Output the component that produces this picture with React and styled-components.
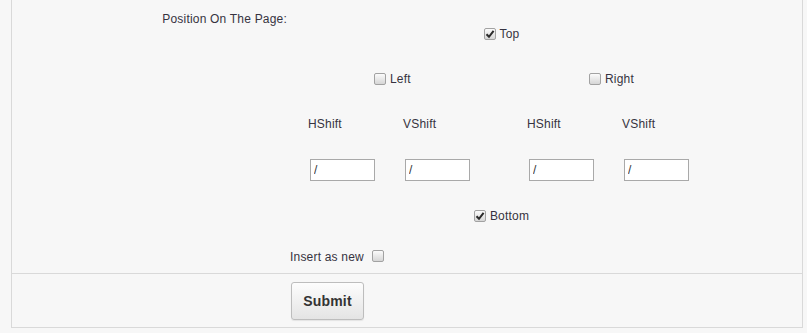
import React from 'react';
import styled, { createGlobalStyle } from 'styled-components';

const GlobalStyle = createGlobalStyle`
  html, body {
    margin: 0;
    background: #f7f7f7;
    font-family: "Liberation Sans", Arial, Helvetica, sans-serif;
    font-size: 12px;
    letter-spacing: 0.2px;
    color: #363340;
  }
`;

const Panel = styled.div`
  box-sizing: border-box;
  margin-left: 11px;
  width: 792px;
  height: 328px;
  border: 1px solid #d9d9d9;
  border-top: 0;
  display: flex;
  flex-direction: column;
`;

const FieldArea = styled.div`
  display: grid;
  grid-template-columns: 278px 420px;
  height: 273px;
`;

const SideLabel = styled.div`
  text-align: right;
  padding: 9px 3px 0 0;
  line-height: 20px;
`;

const Content = styled.div`
  padding-top: 24px;
  display: flex;
  flex-direction: column;
`;

const PositionGrid = styled.div`
  display: grid;
  grid-template-columns: 18px 95px 124px 95px 88px;
  grid-template-rows: 20px 20px 20px 22px 20px;
  row-gap: 25px;
`;

const Cell = styled.div`
  grid-column: ${p => p.col};
  display: flex;
  align-items: center;
  justify-content: ${p => (p.center ? 'center' : 'flex-start')};
  padding-left: ${p => p.indent || 0}px;
  line-height: 20px;
`;

const Choice = styled.label`
  display: flex;
  align-items: center;
  gap: ${p => p.gap || 4}px;
  line-height: 20px;
  cursor: default;
`;

const Box = styled.span`
  box-sizing: border-box;
  width: 12px;
  height: 12px;
  border: 1px solid #a2a2a2;
  border-radius: 2px;
  background: linear-gradient(#fbfbfb, #d6d6d6);
  display: flex;
  align-items: center;
  justify-content: center;
  margin-top: ${p => p.lift || 0}px;
`;

const ShiftInput = styled.input`
  box-sizing: border-box;
  width: 65px;
  height: 22px;
  margin: 0 0 0 2px;
  padding: 0 3px;
  border: 1px solid #a9a9a9;
  background: #fff;
  font-family: "Liberation Sans", Arial, sans-serif;
  font-size: 12px;
  color: #333;
  outline: none;
`;

const InsertRow = styled.div`
  margin-top: 21px;
  display: flex;
`;

const Footer = styled.div`
  border-top: 1px solid #d9d9d9;
  padding: 8px 0 0 279px;
`;

const SubmitButton = styled.button`
  box-sizing: border-box;
  width: 73px;
  height: 38px;
  border: 1px solid #bdbdbd;
  border-radius: 3px;
  background: linear-gradient(#fdfdfd, #e4e4e4);
  box-shadow: 0 1px 1px rgba(0, 0, 0, 0.08);
  font-family: "Liberation Sans", Arial, sans-serif;
  font-weight: bold;
  font-size: 14px;
  letter-spacing: 0.2px;
  color: #333;
  padding: 0;
`;

const Check = ({ checked, lift }) => (
  <Box lift={lift}>
    {checked && (
      <svg width="10" height="10" viewBox="0 0 10 10">
        <path d="M1.5 5.2 L4 7.8 L8.6 1.8" fill="none" stroke="#2b2b2b" strokeWidth="2" />
      </svg>
    )}
  </Box>
);

const Option = ({ label, checked, reverse, gap, lift }) => (
  <Choice gap={gap}>
    {reverse && <span>{label}</span>}
    <Check checked={checked} lift={lift} />
    {!reverse && <span>{label}</span>}
  </Choice>
);

const shifts = ['HShift', 'VShift', 'HShift', 'VShift'];

export default function App() {
  return (
    <>
      <GlobalStyle />
      <Panel>
        <FieldArea>
          <SideLabel>Position On The Page:</SideLabel>
          <Content>
            <PositionGrid>
              <Cell col="1 / -1" center indent={3}>
                <Option label="Top" checked />
              </Cell>
              <Cell col="2 / span 2" indent={66}>
                <Option label="Left" />
              </Cell>
              <Cell col="4 / span 2" indent={62}>
                <Option label="Right" />
              </Cell>
              {shifts.map((s, i) => (
                <Cell key={'l' + i} col={i + 2}>{s}</Cell>
              ))}
              {shifts.map((s, i) => (
                <Cell key={'i' + i} col={i + 2}>
                  <ShiftInput defaultValue="/" />
                </Cell>
              ))}
              <Cell col="1 / -1" center indent={3}>
                <Option label="Bottom" checked />
              </Cell>
            </PositionGrid>
            <InsertRow>
              <Option label="Insert as new" reverse gap={8} lift={-3} />
            </InsertRow>
          </Content>
        </FieldArea>
        <Footer>
          <SubmitButton>Submit</SubmitButton>
        </Footer>
      </Panel>
    </>
  );
}
